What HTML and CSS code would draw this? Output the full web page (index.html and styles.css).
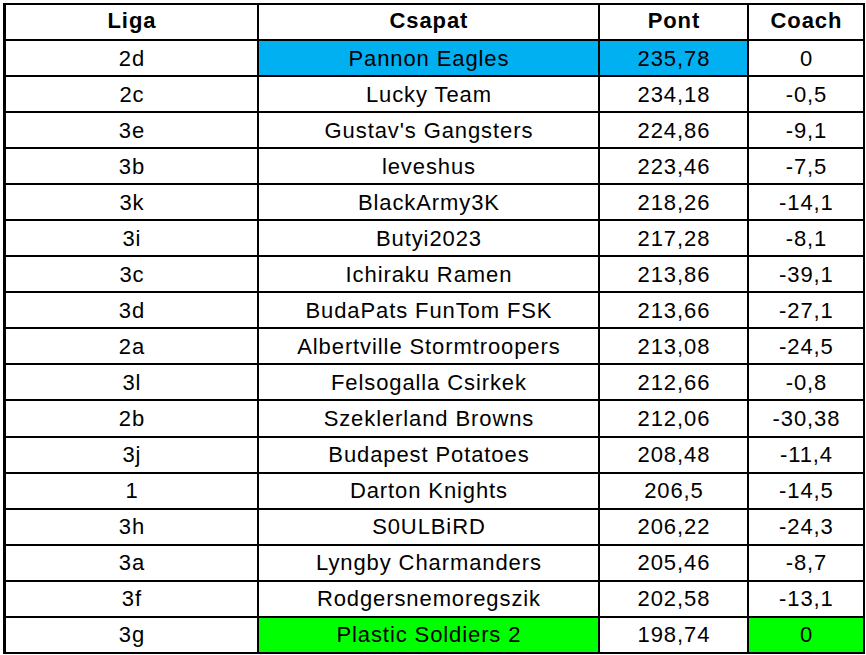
FILE: index.html
```html
<!DOCTYPE html>
<html>
<head>
<meta charset="utf-8">
<link rel="stylesheet" href="styles.css">
</head>
<body>
<div class="sheet">
  <div class="cell hd">Liga</div><div class="cell hd">Csapat</div><div class="cell hd">Pont</div><div class="cell hd">Coach</div>
  <div class="cell">2d</div><div class="cell blue">Pannon Eagles</div><div class="cell blue">235,78</div><div class="cell">0</div>
  <div class="cell">2c</div><div class="cell">Lucky Team</div><div class="cell">234,18</div><div class="cell">-0,5</div>
  <div class="cell">3e</div><div class="cell">Gustav's Gangsters</div><div class="cell">224,86</div><div class="cell">-9,1</div>
  <div class="cell">3b</div><div class="cell">leveshus</div><div class="cell">223,46</div><div class="cell">-7,5</div>
  <div class="cell">3k</div><div class="cell">BlackArmy3K</div><div class="cell">218,26</div><div class="cell">-14,1</div>
  <div class="cell">3i</div><div class="cell">Butyi2023</div><div class="cell">217,28</div><div class="cell">-8,1</div>
  <div class="cell">3c</div><div class="cell">Ichiraku Ramen</div><div class="cell">213,86</div><div class="cell">-39,1</div>
  <div class="cell">3d</div><div class="cell">BudaPats FunTom FSK</div><div class="cell">213,66</div><div class="cell">-27,1</div>
  <div class="cell">2a</div><div class="cell">Albertville Stormtroopers</div><div class="cell">213,08</div><div class="cell">-24,5</div>
  <div class="cell">3l</div><div class="cell">Felsogalla Csirkek</div><div class="cell">212,66</div><div class="cell">-0,8</div>
  <div class="cell">2b</div><div class="cell">Szeklerland Browns</div><div class="cell">212,06</div><div class="cell">-30,38</div>
  <div class="cell">3j</div><div class="cell">Budapest Potatoes</div><div class="cell">208,48</div><div class="cell">-11,4</div>
  <div class="cell">1</div><div class="cell">Darton Knights</div><div class="cell">206,5</div><div class="cell">-14,5</div>
  <div class="cell">3h</div><div class="cell">S0ULBiRD</div><div class="cell">206,22</div><div class="cell">-24,3</div>
  <div class="cell">3a</div><div class="cell">Lyngby Charmanders</div><div class="cell">205,46</div><div class="cell">-8,7</div>
  <div class="cell">3f</div><div class="cell">Rodgersnemoregszik</div><div class="cell">202,58</div><div class="cell">-13,1</div>
  <div class="cell">3g</div><div class="cell green">Plastic Soldiers 2</div><div class="cell">198,74</div><div class="cell green">0</div>
</div>
</body>
</html>
```

FILE: styles.css
```css
html, body {
  margin: 0;
  padding: 0;
  background: #ffffff;
}

body {
  padding: 3px 0 0 3px;
  font-family: "Liberation Sans", Arial, sans-serif;
}

.sheet {
  display: grid;
  grid-template-columns: 251px 339px 147px 114px;
  grid-template-rows: 34px;
  grid-auto-rows: 34.06px;
  gap: 2px;
  padding: 2px 2px 2px 3px;
  background: #000000;
  width: max-content;
}

.cell {
  background: #ffffff;
  color: #000000;
  font-size: 22px;
  letter-spacing: 0.9px;
  padding: 1px 0 0 0.9px;
  display: flex;
  align-items: center;
  justify-content: center;
  white-space: nowrap;
  line-height: 1;
}

.hd {
  font-weight: bold;
  letter-spacing: 0.9px;
  padding: 0 0 3px 0.9px;
}

.blue {
  background: #00b0f0;
}

.green {
  background: #00ff00;
}
```
